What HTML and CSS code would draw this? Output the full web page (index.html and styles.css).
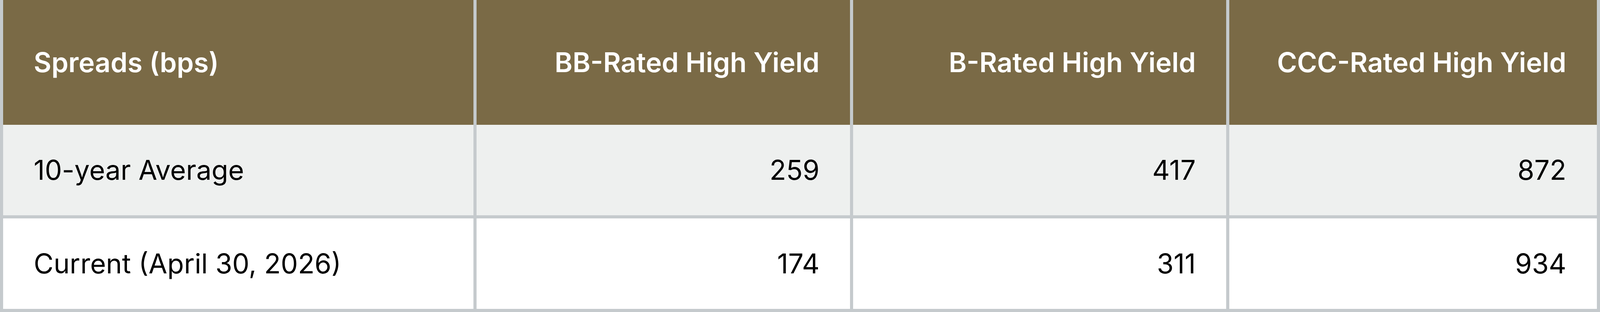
FILE: index.html
```html
<!DOCTYPE html>
<html lang="en">
<head>
<meta charset="utf-8">
<title>Spreads</title>
<link rel="stylesheet" href="styles.css">
</head>
<body>
<div class="spreads">
  <div class="cell head">Spreads (bps)</div>
  <div class="cell head num">BB-Rated High Yield</div>
  <div class="cell head num">B-Rated High Yield</div>
  <div class="cell head num">CCC-Rated High Yield</div>

  <div class="cell row-a">10-year Average</div>
  <div class="cell row-a num">259</div>
  <div class="cell row-a num">417</div>
  <div class="cell row-a num">872</div>

  <div class="cell row-b">Current (April 30, 2026)</div>
  <div class="cell row-b num">174</div>
  <div class="cell row-b num">311</div>
  <div class="cell row-b num">934</div>
</div>
</body>
</html>
```

FILE: styles.css
```css
html, body {
  margin: 0;
  padding: 0;
  background: #ffffff;
}

.spreads {
  display: grid;
  grid-template-columns: 1664fr 1322fr 1320fr 1300fr;
  grid-template-rows: 320px 232px 240px;
  column-gap: 8px;
  padding: 0 8px 8px 8px;
  width: 100%;
  height: 800px;
  box-sizing: border-box;
  background: #c5cacd;
  font-family: "Inter", "Liberation Sans", sans-serif;
  font-size: 1.7003vw;
  color: #000000;
}

.cell {
  display: flex;
  align-items: center;
  min-width: 0;
  padding: 0 1.9129vw;
  white-space: nowrap;
}

.num {
  justify-content: flex-end;
}

.head {
  background: #7a6a46;
  color: #ffffff;
  font-weight: 600;
}

.row-a {
  background: #eef0ef;
}

.row-b {
  background: #ffffff;
  margin-top: 8px;
}
```
